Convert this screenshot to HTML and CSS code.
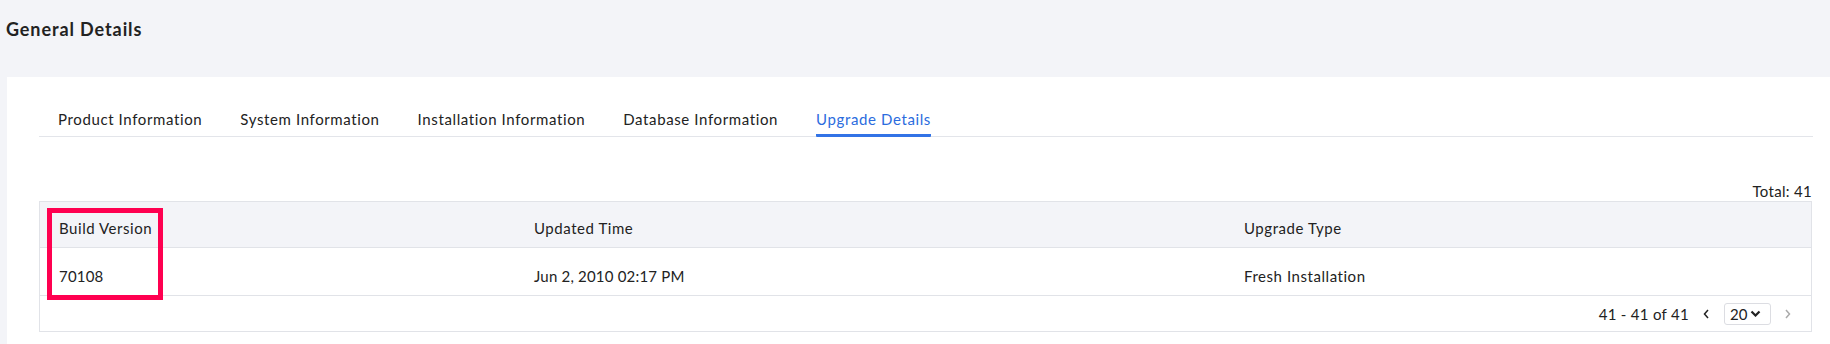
FILE: index.html
```html
<!DOCTYPE html>
<html lang="en">
<head>
    <meta charset="UTF-8">
    <meta name="viewport" content="width=device-width, initial-scale=1.0">
    <title>General Details</title>
    <link rel="stylesheet" href="styles.css">
</head>
<body>
    <h1 class="page-title">General Details</h1>

    <div class="panel">
        <div class="tabs">
            <div class="tab">Product Information</div>
            <div class="tab">System Information</div>
            <div class="tab">Installation Information</div>
            <div class="tab">Database Information</div>
            <div class="tab active">Upgrade Details</div>
        </div>

        <div class="total">Total: 41</div>

        <div class="grid">
            <table>
                <colgroup>
                    <col class="col-build">
                    <col class="col-time">
                    <col>
                </colgroup>
                <thead>
                    <tr>
                        <th>Build Version</th>
                        <th>Updated Time</th>
                        <th>Upgrade Type</th>
                    </tr>
                </thead>
                <tbody>
                    <tr>
                        <td class="num">70108</td>
                        <td class="num">Jun 2, 2010 02:17 PM</td>
                        <td>Fresh Installation</td>
                    </tr>
                </tbody>
            </table>

            <div class="pager">
                <span class="range">41 - 41 of 41</span>
                <svg class="nav prev" width="6" height="10" viewBox="0 0 6 10"><polyline points="5,1 1.5,5 5,9" fill="none" stroke="#222" stroke-width="1.5"/></svg>
                <div class="page-size">
                    <span>20</span>
                    <svg width="11" height="7" viewBox="0 0 11 7"><polyline points="1.5,1.5 5.5,5.5 9.5,1.5" fill="none" stroke="#222" stroke-width="2.2"/></svg>
                </div>
                <svg class="nav next" width="6" height="10" viewBox="0 0 6 10"><polyline points="1,1 4.5,5 1,9" fill="none" stroke="#aaa" stroke-width="1.5"/></svg>
            </div>

            <!-- highlight marker around the build version column -->
            <div class="highlight"></div>
        </div>
    </div>
</body>
</html>
```

FILE: styles.css
```css
body {
    margin: 0;
    padding: 18px 0 0 6px;
    background-color: #f3f4f8;
    font-family: Lato, "Open Sans", sans-serif;
    color: #222;
    min-height: 344px;
    box-sizing: border-box;
}

.page-title {
    margin: 0 0 37px 0;
    font-size: 18px;
    line-height: 22px;
    font-weight: bold;
    letter-spacing: 0.9px;
    color: #222;
}

.panel {
    margin-left: 1px;
    background-color: white;
    padding: 22px 17px 20px 32px;
    min-height: 267px;
    box-sizing: border-box;
}

.tabs {
    display: flex;
    gap: 38px;
    padding-left: 19px;
    border-bottom: 1px solid #e3e5ea;
}

.tab {
    padding: 10px 0 5px 0;
    font-size: 15px;
    line-height: 20px;
    letter-spacing: 0.62px;
    border-bottom: 3px solid transparent;
    margin-bottom: -1px;
    color: #222;
    cursor: pointer;
}

.tab.active {
    color: #2b6cde;
    border-bottom-color: #3273e6;
    border-radius: 0 0 1px 1px;
}

.total {
    margin-top: 44px;
    text-align: right;
    font-size: 15px;
    line-height: 20px;
    letter-spacing: 0.3px;
    padding-right: 1px;
}

.grid {
    position: relative;
    border: 1px solid #e1e3e8;
    margin-right: 1px;
}

table {
    width: 100%;
    border-collapse: collapse;
    table-layout: fixed;
}

.col-build {
    width: 475px;
}

.col-time {
    width: 710px;
}

th, td {
    text-align: left;
    font-size: 15px;
    line-height: 20px;
    letter-spacing: 0.55px;
    padding: 16px 20px 9px 19px;
    font-weight: normal;
    border-bottom: 1px solid #e1e3e8;
}

th {
    background-color: #f3f4f8;
}

td {
    padding-top: 18px;
}

td.num {
    letter-spacing: 0.2px;
}

.pager {
    display: flex;
    justify-content: flex-end;
    align-items: center;
    height: 35px;
    padding-right: 20px;
    font-size: 15px;
}

.range {
    margin-right: 14px;
    letter-spacing: 0.3px;
}

.page-size {
    display: flex;
    align-items: center;
    gap: 3px;
    height: 22px;
    width: 47px;
    box-sizing: border-box;
    padding-left: 5px;
    margin: 0 14px 0 15px;
    border: 1px solid #dcdde2;
    border-radius: 3px;
}

.highlight {
    position: absolute;
    left: 7px;
    top: 6px;
    width: 116px;
    height: 92px;
    box-sizing: border-box;
    border: 5px solid #ff0050;
}
```
